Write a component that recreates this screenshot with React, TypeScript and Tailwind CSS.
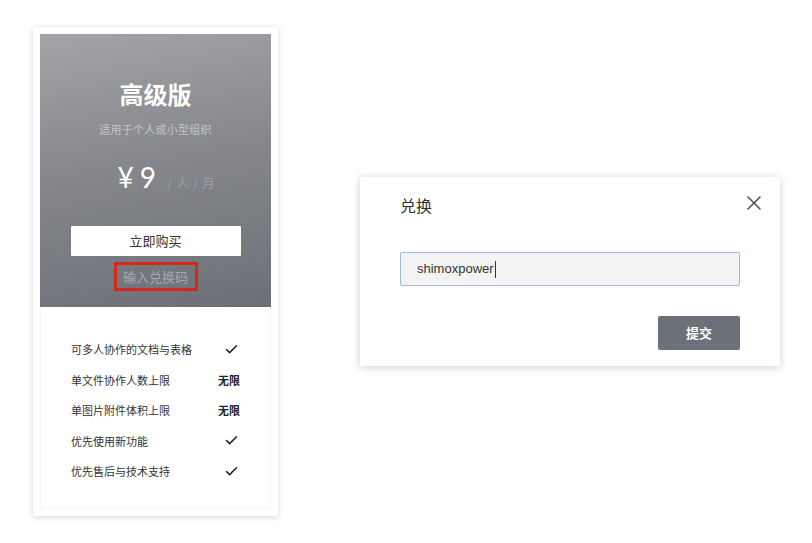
import { Check, X } from 'lucide-react';

const features: { label: string; value: string | null }[] = [
  { label: '可多人协作的文档与表格', value: null },
  { label: '单文件协作人数上限', value: '无限' },
  { label: '单图片附件体积上限', value: '无限' },
  { label: '优先使用新功能', value: null },
  { label: '优先售后与技术支持', value: null },
];

const font = { fontFamily: '"Noto Sans CJK SC", "Liberation Sans", sans-serif' };

export default function App() {
  return (
    <div className="w-[812px] h-[543px] bg-white relative flex" style={font}>
      {/* pricing card */}
      <div className="ml-[33px] mt-[27px] w-[245px] h-[489px] bg-white p-[7px] shadow-[0_1px_6px_rgba(0,0,0,0.16)] flex flex-col">
        <div className="h-[273px] bg-[linear-gradient(170deg,#a3a4a8_0%,#86888d_45%,#6c6f75_100%)] flex flex-col items-center">
          <h2 className="mt-[45px] text-[24px] leading-[30px] font-bold text-white">高级版</h2>
          <p className="mt-[12px] text-[11px] leading-[16px] text-[#c4c6ca] tracking-wide">适用于个人或小型组织</p>
          <div className="mt-[23px] flex items-baseline ml-[22px]">
            <span className="text-[28px] leading-[34px] text-white font-normal" style={{ fontFamily: 'Lato, sans-serif' }}>
              ¥<span className="ml-[6px]">9</span>
            </span>
            <span className="ml-[11px] text-[12px] text-[#9ea1a6] tracking-[1px]">/ 人 / 月</span>
          </div>
          <button className="mt-[32px] w-[170px] h-[30px] bg-white text-[13px] text-[#333] rounded-[1px]">立即购买</button>
          <div className="mt-[6px] w-[84px] h-[29px] border-[3px] border-[#d3281c] flex items-center justify-center text-[13px] text-[#a7a9ad]">
            输入兑换码
          </div>
        </div>
        <div className="flex-1 border-x border-b border-[#f6f6f6] px-[30px] pt-[27px]">
          {features.map((f) => (
            <div key={f.label} className="h-[30.5px] flex items-center justify-between text-[11px] text-[#333]">
              <span>{f.label}</span>
              {f.value ? (
                <span className="font-bold text-[11px] text-[#222]">{f.value}</span>
              ) : (
                <Check size={15} strokeWidth={2.4} className="text-[#222] mr-[1px]" />
              )}
            </div>
          ))}
        </div>
      </div>

      {/* redeem dialog */}
      <div className="absolute left-[360px] top-[177px] w-[420px] h-[189px] bg-white shadow-[0_1px_8px_rgba(0,0,0,0.2)] px-[40px]">
        <div className="flex items-center justify-between mt-[17px]">
          <h3 className="text-[16px] leading-[22px] text-[#333]">兑换</h3>
          <X size={24} strokeWidth={1.4} className="text-[#444] -mr-[26px] -mt-[4px]" />
        </div>
        <div className="mt-[36px] h-[34px] w-[340px] bg-[#f3f3f3] border border-[#9fb8d8] rounded-[2px] flex items-center pl-[16px] text-[13px] text-[#333]" style={{ fontFamily: '"Liberation Sans", sans-serif' }}>
          shimoxpower<span className="inline-block w-px h-[17px] bg-[#333] ml-[1px]" />
        </div>
        <div className="flex justify-end mt-[30px] w-[340px]">
          <button className="w-[82px] h-[34px] bg-[#6b7178] text-white text-[13px] font-bold rounded-[2px]">提交</button>
        </div>
      </div>
    </div>
  );
}
